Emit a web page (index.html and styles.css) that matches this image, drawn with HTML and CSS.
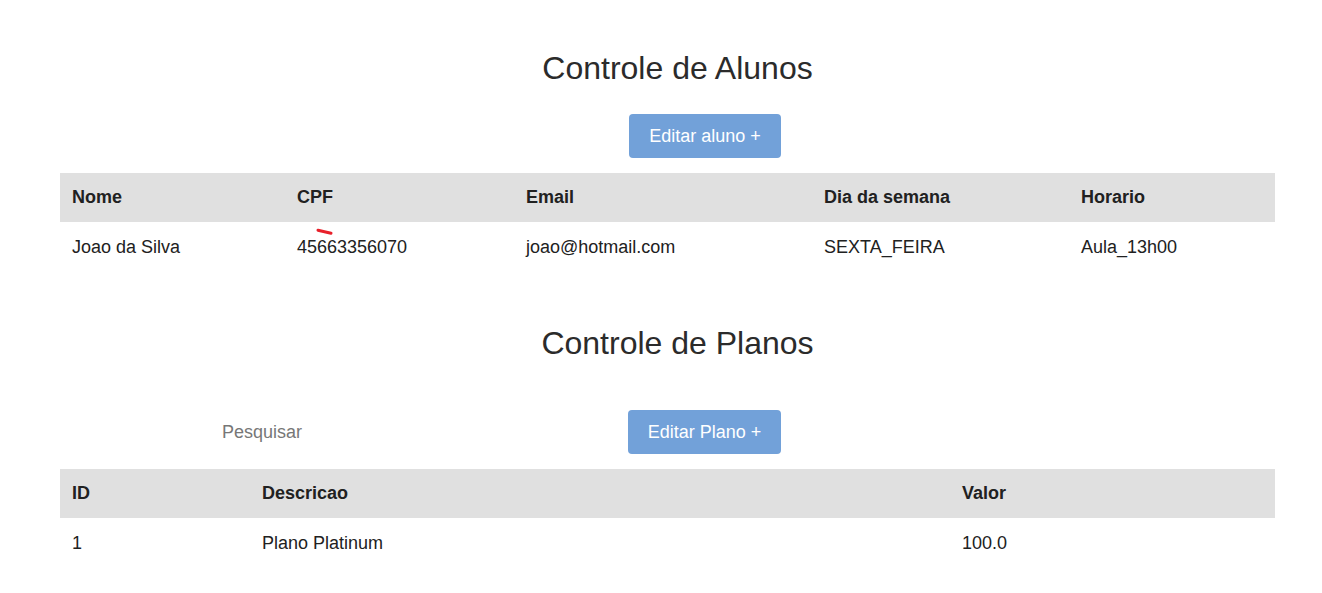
FILE: index.html
```html
<!DOCTYPE html>
<html lang="pt">
<head>
<meta charset="utf-8">
<title>Controle</title>
<link rel="stylesheet" href="styles.css">
</head>
<body>
<main class="page">
  <section class="block">
    <h1 class="title">Controle de Alunos</h1>
    <div class="actions actions-alunos">
      <button class="btn">Editar aluno +</button>
    </div>
    <table class="grid grid-alunos">
      <thead>
        <tr><th>Nome</th><th>CPF</th><th>Email</th><th>Dia da semana</th><th>Horario</th></tr>
      </thead>
      <tbody>
        <tr>
          <td>Joao da Silva</td>
          <td class="mark-cell">45663356070<svg class="mark" width="18" height="8" viewBox="0 0 18 8"><path d="M2 2.2 L15 5.2" stroke="#e8202a" stroke-width="3" stroke-linecap="round" fill="none"/></svg></td>
          <td>joao@hotmail.com</td>
          <td>SEXTA_FEIRA</td>
          <td>Aula_13h00</td>
        </tr>
      </tbody>
    </table>
  </section>
  <section class="block block-planos">
    <h1 class="title">Controle de Planos</h1>
    <div class="actions actions-planos">
      <input class="search" type="text" placeholder="Pesquisar">
      <button class="btn">Editar Plano +</button>
    </div>
    <table class="grid grid-planos">
      <thead>
        <tr><th>ID</th><th>Descricao</th><th>Valor</th></tr>
      </thead>
      <tbody>
        <tr><td>1</td><td>Plano Platinum</td><td>100.0</td></tr>
      </tbody>
    </table>
  </section>
</main>
</body>
</html>
```

FILE: styles.css
```css
* { box-sizing: border-box; }
html, body { margin: 0; padding: 0; background: #fff; }
body {
  font-family: "Liberation Sans", Arial, sans-serif;
  color: #212121;
  font-size: 18px;
}
.page {
  width: 1215px;
  margin-left: 60px;
  padding-top: 46px;
}
.title {
  margin: 0;
  padding-left: 20px;
  text-align: center;
  font-weight: 400;
  font-size: 32px;
  line-height: 44px;
  color: #2b2b2b;
}
.actions {
  display: flex;
  align-items: center;
}
.actions-alunos {
  margin-top: 24px;
  margin-bottom: 15px;
  padding-left: 569px;
}
.actions-planos {
  margin-top: 45px;
  margin-bottom: 15px;
  padding-left: 150px;
}
.btn {
  font-family: "Liberation Sans", Arial, sans-serif;
  font-size: 18px;
  color: #fff;
  background: #72a1d9;
  border: none;
  border-radius: 4px;
  height: 44px;
  padding: 0;
  line-height: 44px;
  cursor: pointer;
}
.actions-planos .btn { width: 153px; }
.actions-alunos .btn { width: 152px; }
.search {
  width: 418px;
  height: 44px;
  border: none;
  outline: none;
  padding: 0 12px;
  font-family: "Liberation Sans", Arial, sans-serif;
  font-size: 18px;
  color: #212121;
  background: transparent;
}
.search::placeholder { color: #777; }
.grid {
  width: 1215px;
  border-collapse: collapse;
  table-layout: fixed;
}
.grid th, .grid td {
  text-align: left;
  padding: 0 12px;
  height: 50px;
  vertical-align: middle;
  white-space: nowrap;
}
.grid th {
  background: #e0e0e0;
  font-weight: 700;
  height: 49px;
}
.grid-alunos th:nth-child(1) { width: 225px; }
.grid-alunos th:nth-child(2) { width: 229px; }
.grid-alunos th:nth-child(3) { width: 298px; }
.grid-alunos th:nth-child(4) { width: 257px; }
.grid-alunos th:nth-child(5) { width: 206px; }
.grid-planos th:nth-child(1) { width: 190px; }
.grid-planos th:nth-child(2) { width: 700px; }
.grid-planos th:nth-child(3) { width: 325px; }
.block-planos { padding-top: 49px; }
.mark-cell { position: relative; }
.mark {
  position: absolute;
  left: 31px;
  top: 6px;
}
```
